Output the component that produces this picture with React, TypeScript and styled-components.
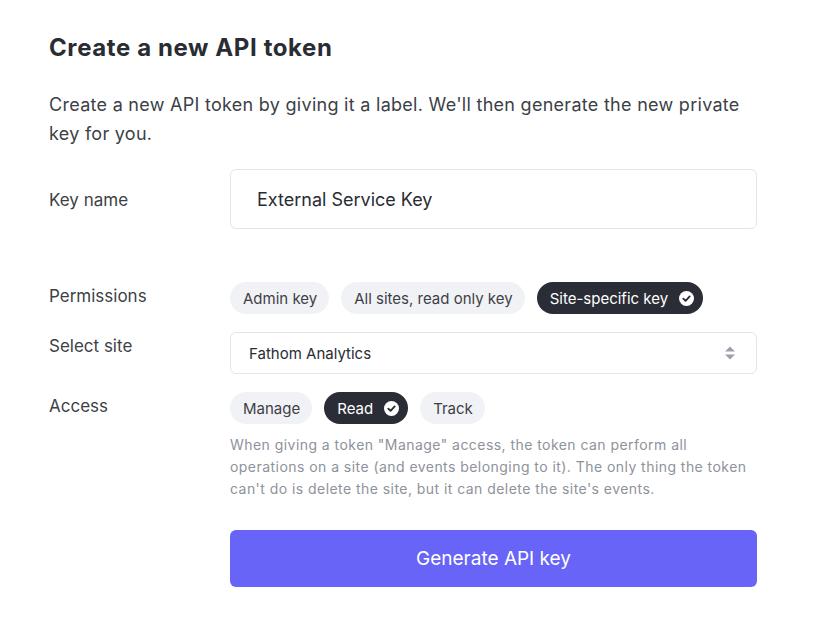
import styled, { createGlobalStyle } from 'styled-components';

const GlobalStyle = createGlobalStyle`
  body {
    margin: 0;
    background: #ffffff;
    font-family: Inter, "Noto Sans", Arial, sans-serif;
    color: #2a2c33;
  }
`;

interface ChipProps {
  label: string;
  selected?: boolean;
}

const CheckIcon = () => (
  <svg width="15" height="15" viewBox="0 0 16 16" aria-hidden="true">
    <circle cx="8" cy="8" r="8" fill="#ffffff" />
    <path d="M4.6 8.2 L7 10.5 L11.4 5.8" fill="none" stroke="#2b2d36" strokeWidth="2" strokeLinecap="round" strokeLinejoin="round" />
  </svg>
);

const SelectArrows = () => (
  <svg width="12" height="16" viewBox="0 0 12 16" aria-hidden="true">
    <path d="M6 1.5 L11 6.5 H1 Z" fill="#9ca0aa" />
    <path d="M6 14.5 L11 9.5 H1 Z" fill="#9ca0aa" />
  </svg>
);

const Chip = ({ label, selected }: ChipProps) => (
  <ChipButton $selected={selected}>
    {label}
    {selected && <CheckIcon />}
  </ChipButton>
);

const App = () => {
  return (
    <>
      <GlobalStyle />
      <Page>
        <Title>Create a new API token</Title>
        <Intro>
          Create a new API token by giving it a label. We'll then generate the new private key for
          you.
        </Intro>

        <Form>
          <Label $offset={19}>Key name</Label>
          <TextInput defaultValue="External Service Key" />

          <Spacer />

          <Label $offset={2}>Permissions</Label>
          <ChipRow>
            <Chip label="Admin key" />
            <Chip label="All sites, read only key" />
            <Chip label="Site-specific key" selected />
          </ChipRow>

          <Label $offset={2}>Select site</Label>
          <SelectBox>
            <span>Fathom Analytics</span>
            <SelectArrows />
          </SelectBox>

          <Label $offset={2}>Access</Label>
          <div>
            <ChipRow>
              <Chip label="Manage" />
              <Chip label="Read" selected />
              <Chip label="Track" />
            </ChipRow>
            <Help>
              When giving a token "Manage" access, the token can perform all operations on a site
              (and events belonging to it). The only thing the token can't do is delete the site,
              but it can delete the site's events.
            </Help>
          </div>

          <div />
          <GenerateButton>Generate API key</GenerateButton>
        </Form>
      </Page>
    </>
  );
};

const Page = styled.main`
  width: 708px;
  padding: 33px 0 40px 49px;
`;

const Title = styled.h1`
  margin: 0;
  font-size: 24px;
  line-height: 30px;
  font-weight: 700;
  color: #2a2c33;
  letter-spacing: 0.6px;
`;

const Intro = styled.p`
  margin: 27px 0 0;
  font-size: 18px;
  line-height: 29px;
  letter-spacing: 0.28px;
  color: #3d3f47;
`;

const Form = styled.div`
  display: grid;
  grid-template-columns: 181px 527px;
  row-gap: 18px;
  margin-top: 21px;
`;

const Spacer = styled.div`
  grid-column: 1 / -1;
  height: 1px;
  margin-bottom: 16px;
`;

const Label = styled.div<{ $offset: number }>`
  padding-top: ${(p) => p.$offset}px;
  font-size: 17px;
  line-height: 24px;
  color: #3d3f47;
`;

const TextInput = styled.input`
  box-sizing: border-box;
  width: 100%;
  height: 60px;
  padding: 0 26px;
  border: 1px solid #e4e5ea;
  border-radius: 6px;
  font-family: inherit;
  font-size: 18px;
  color: #2a2c33;
  outline: none;
`;

const ChipRow = styled.div`
  display: flex;
  gap: 12px;
`;

const ChipButton = styled.button<{ $selected?: boolean }>`
  display: inline-flex;
  align-items: center;
  gap: 11px;
  height: 32px;
  padding: 0 ${(p) => (p.$selected ? '9px' : '12px')} 0 13px;
  border: none;
  border-radius: 16px;
  background: ${(p) => (p.$selected ? '#2b2d36' : '#f1f2f5')};
  color: ${(p) => (p.$selected ? '#ffffff' : '#3d3f47')};
  font-family: inherit;
  font-size: 15px;
  cursor: pointer;
`;

const SelectBox = styled.div`
  box-sizing: border-box;
  display: flex;
  align-items: center;
  justify-content: space-between;
  height: 42px;
  padding: 0 20px 0 18px;
  border: 1px solid #e4e5ea;
  border-radius: 6px;
  font-size: 15px;
  color: #2a2c33;
`;

const Help = styled.p`
  margin: 10px 0 0;
  font-size: 14px;
  line-height: 22px;
  letter-spacing: 0.45px;
  color: #8e929b;
`;

const GenerateButton = styled.button`
  height: 57px;
  margin-top: 12px;
  border: none;
  border-radius: 6px;
  background: #6764f7;
  color: #ffffff;
  font-family: inherit;
  font-size: 19px;
  cursor: pointer;
`;

export default App;
